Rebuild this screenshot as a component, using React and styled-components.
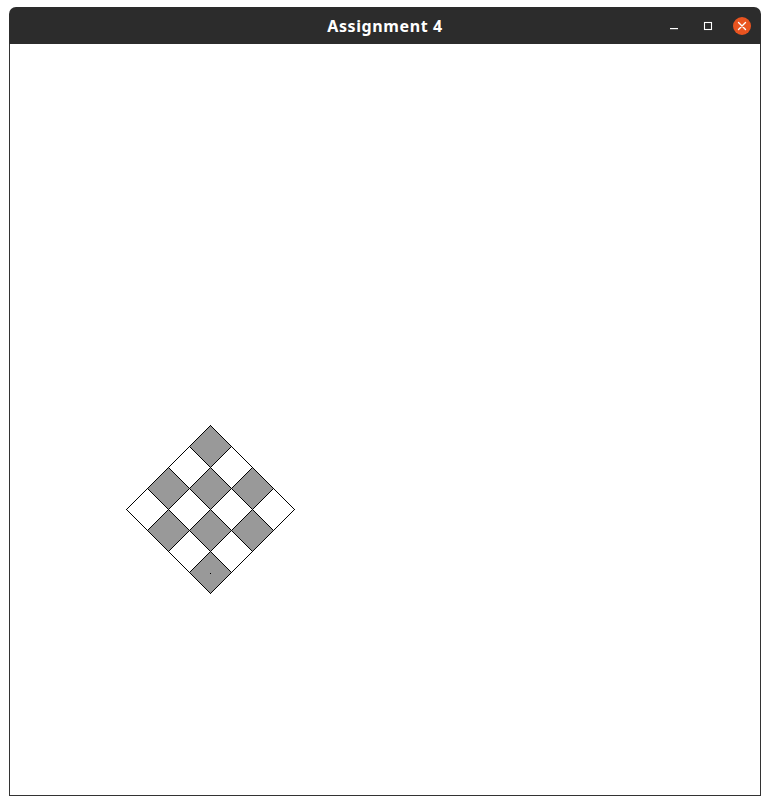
import React from "react";
import styled, { createGlobalStyle } from "styled-components";

const GlobalStyle = createGlobalStyle`
  html, body {
    margin: 0;
    padding: 0;
    background: #ffffff;
  }
  body {
    font-family: "Noto Sans", "DejaVu Sans", sans-serif;
  }
`;

const Page = styled.div`
  width: 770px;
  height: 805px;
  padding: 7px 9px 0 9px;
  box-sizing: border-box;
`;

const Window = styled.div`
  width: 752px;
  height: 789px;
  display: flex;
  flex-direction: column;
  border-radius: 7px 7px 0 0;
  overflow: hidden;
`;

const TitleBar = styled.div`
  height: 37px;
  flex-shrink: 0;
  background: #2c2c2c;
  display: grid;
  grid-template-columns: 1fr auto 1fr;
  align-items: center;
  color: #ffffff;
`;

const Title = styled.div`
  grid-column: 2;
  font-family: "Noto Sans", "DejaVu Sans", sans-serif;
  font-weight: 700;
  font-size: 16px;
  letter-spacing: 0.6px;
  padding-top: 1px;
`;

const Controls = styled.div`
  grid-column: 3;
  justify-self: end;
  display: flex;
  align-items: center;
  gap: 16px;
  padding-right: 10px;
`;

const ControlButton = styled.div`
  width: 18px;
  height: 18px;
  display: flex;
  align-items: center;
  justify-content: center;
  border-radius: 50%;
  background: ${(p) => (p.$close ? "#e95420" : "transparent")};
`;

const Canvas = styled.div`
  flex: 1;
  border: 1px solid #333333;
  border-top: none;
  background: #ffffff;
  display: flex;
`;

const SIZE = 42;
const TOP_X = 200;
const TOP_Y = 381;

function cellPoints(i, j) {
  const cx = TOP_X + (j - i) * (SIZE / 2);
  const cy = TOP_Y + (i + j) * (SIZE / 2);
  const h = SIZE / 2;
  return `${cx},${cy} ${cx + h},${cy + h} ${cx},${cy + SIZE} ${cx - h},${cy + h}`;
}

function Board() {
  const cells = [];
  for (let i = 0; i < 4; i++) {
    for (let j = 0; j < 4; j++) {
      cells.push(
        <polygon
          key={`${i}-${j}`}
          points={cellPoints(i, j)}
          fill={(i + j) % 2 === 0 ? "#999999" : "#ffffff"}
          stroke="#000000"
          strokeWidth="1"
        />
      );
    }
  }
  return (
    <svg width="750" height="751" viewBox="0 0 750 751" shapeRendering="crispEdges">
      <g transform="translate(0.5 0.5)">
        {cells}
        <rect x={TOP_X - 0.5} y={TOP_Y + 147.5} width="1" height="1" fill="#000000" />
      </g>
    </svg>
  );
}

export default function App() {
  return (
    <>
      <GlobalStyle />
      <Page>
        <Window>
          <TitleBar>
            <Title>Assignment 4</Title>
            <Controls>
              <ControlButton>
                <svg width="10" height="10" viewBox="0 0 10 10">
                  <rect x="1" y="7" width="8" height="1.2" fill="#ffffff" />
                </svg>
              </ControlButton>
              <ControlButton>
                <svg width="10" height="10" viewBox="0 0 10 10">
                  <rect x="1.5" y="1.5" width="7" height="7" fill="none" stroke="#ffffff" strokeWidth="1.1" />
                </svg>
              </ControlButton>
              <ControlButton $close>
                <svg width="10" height="10" viewBox="0 0 10 10">
                  <path d="M1.5 1.5 L8.5 8.5 M8.5 1.5 L1.5 8.5" stroke="#ffffff" strokeWidth="1.4" strokeLinecap="round" />
                </svg>
              </ControlButton>
            </Controls>
          </TitleBar>
          <Canvas>
            <Board />
          </Canvas>
        </Window>
      </Page>
    </>
  );
}
